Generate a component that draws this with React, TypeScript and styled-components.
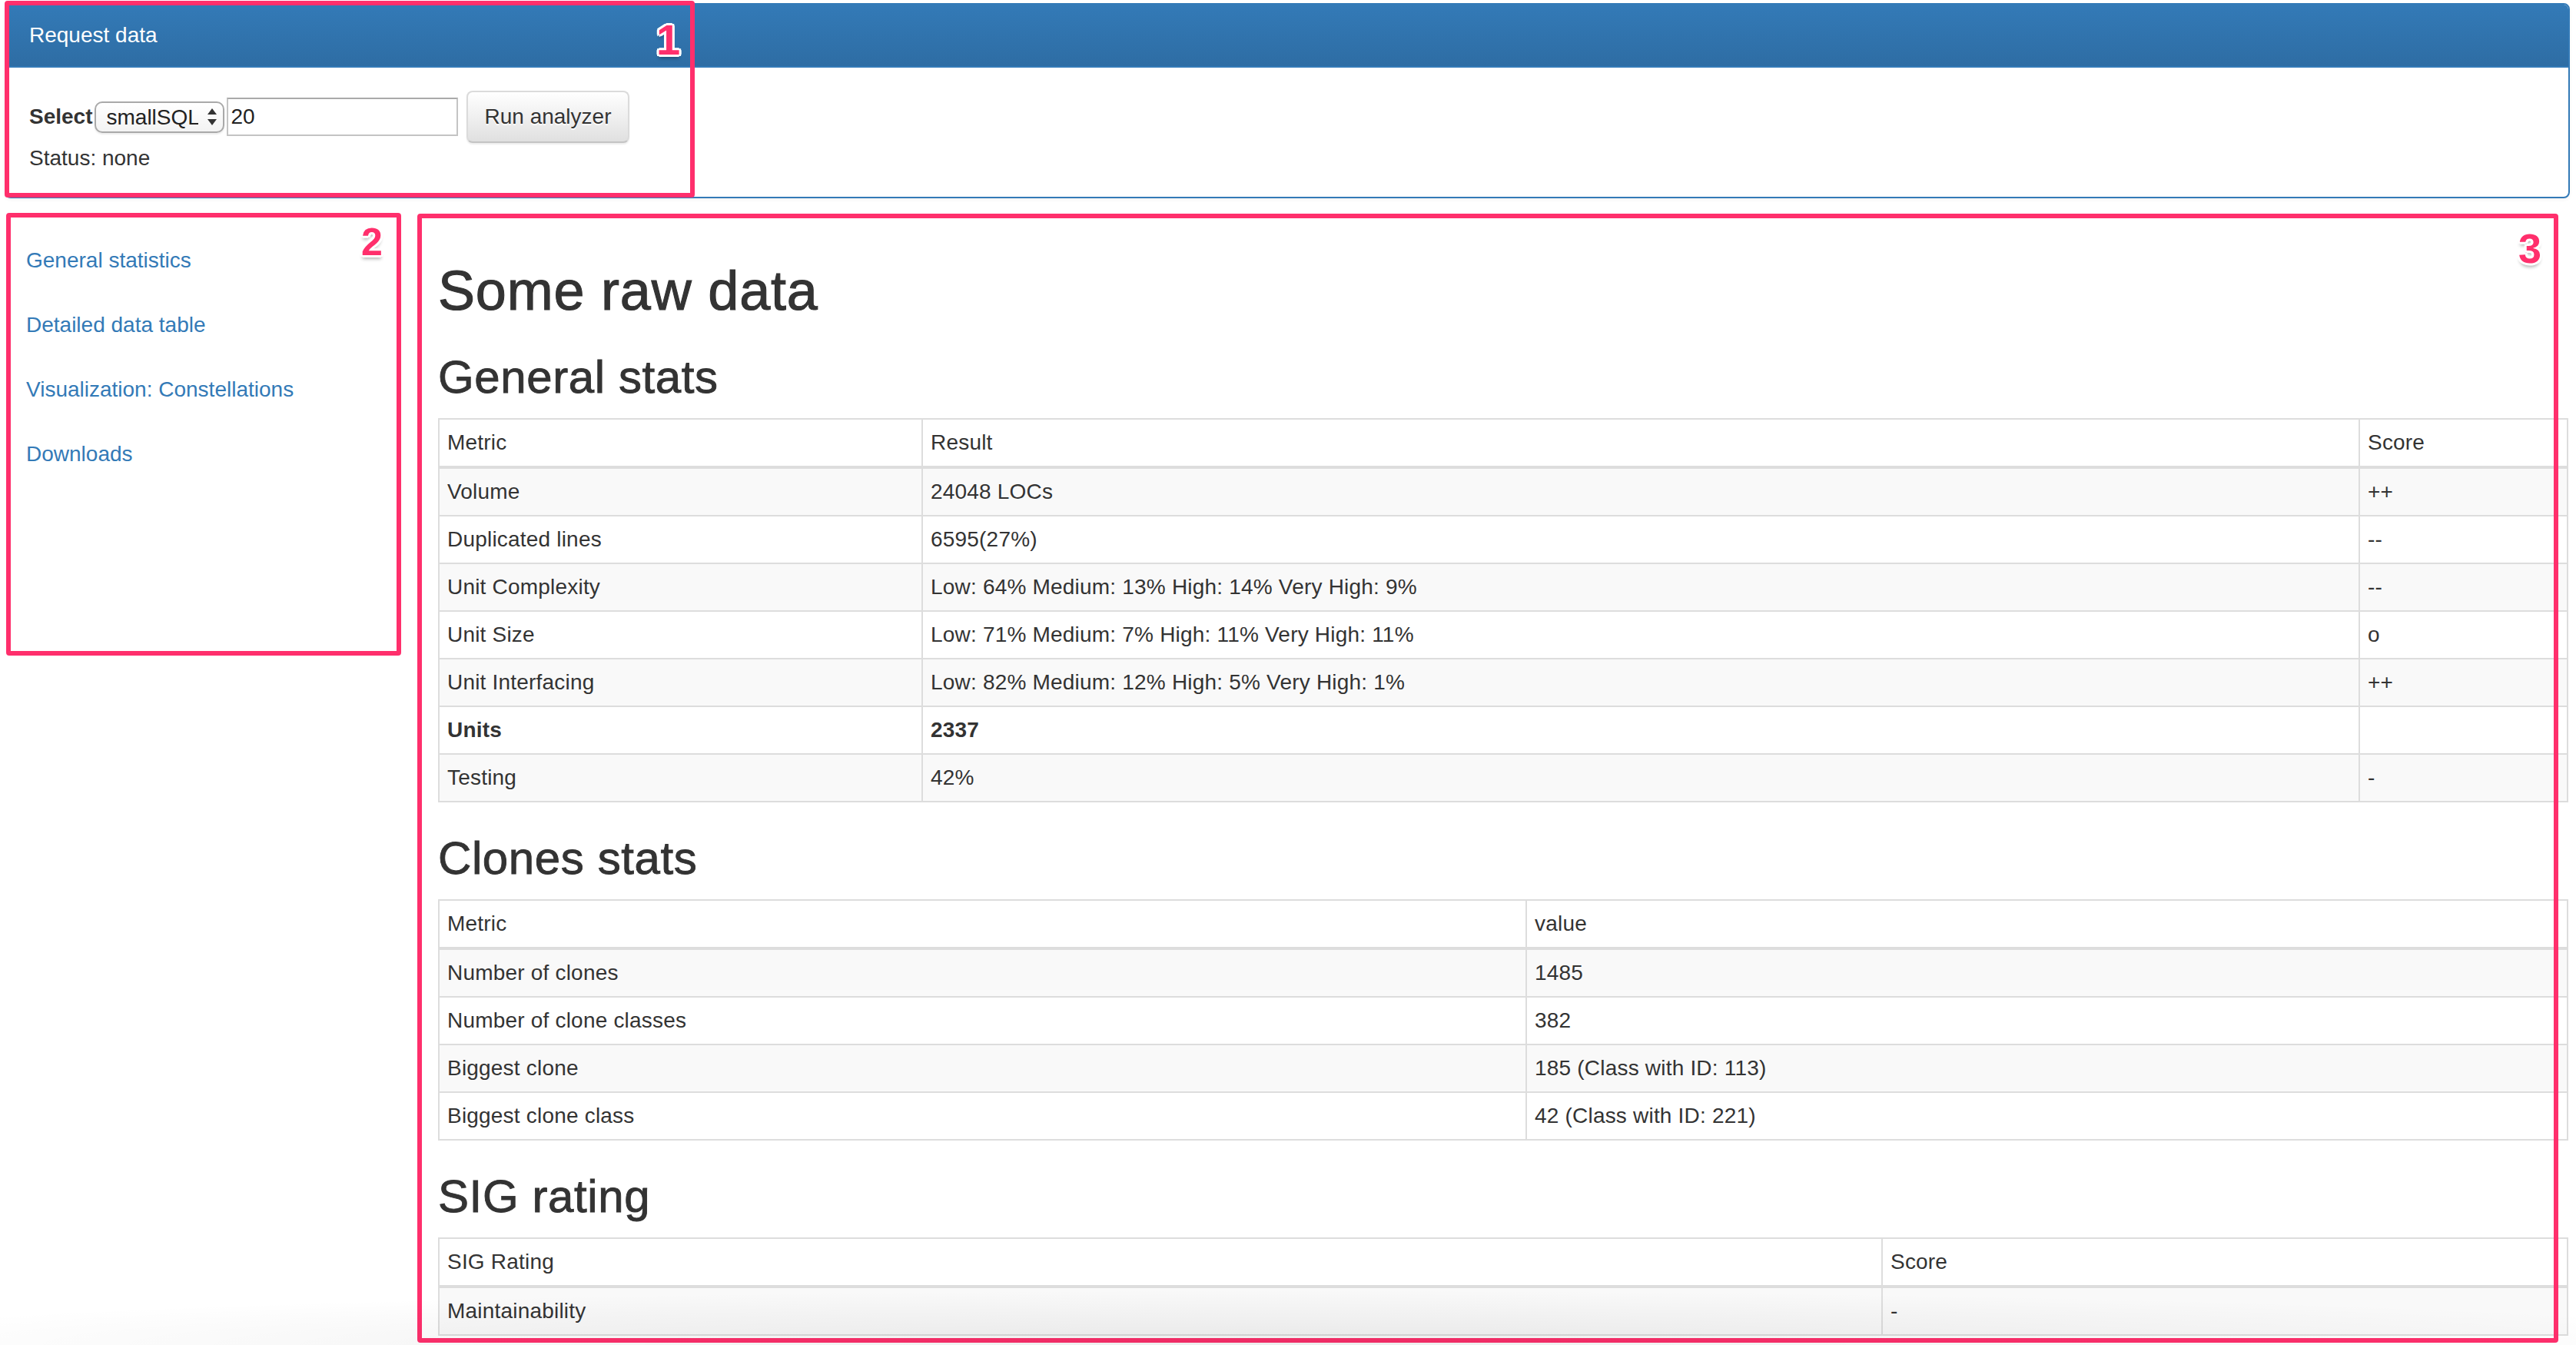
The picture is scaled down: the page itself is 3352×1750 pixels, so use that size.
import React from "react";
import styled, { createGlobalStyle } from "styled-components";

const GlobalStyle = createGlobalStyle`
  * { box-sizing: border-box; }
  html, body {
    margin: 0;
    padding: 0;
    background: #fff;
    overflow: hidden;
  }
  body {
    font-family: "Liberation Sans", Arial, Helvetica, sans-serif;
    font-size: 14px;
    line-height: 1.42857;
    color: #333;
  }
`;

const Page = styled.div`
  zoom: 2;
  position: relative;
  height: 875px;
  overflow: hidden;
  padding: 2px 4px 0 3px;
`;

/* ---------- panel ---------- */
const Panel = styled.section`
  background: #fff;
  border: 1px solid #337ab7;
  border-radius: 4px;
  box-shadow: 0 1px 2px rgba(0, 0, 0, 0.05);
  margin-bottom: 20.5px;
`;

const PanelHeading = styled.div`
  background-image: linear-gradient(to bottom, #337ab7 0, #2e6da4 100%);
  color: #fff;
  padding: 10px 15px;
  line-height: 20px;
  border-bottom: 1px solid #337ab7;
  border-radius: 3px 3px 0 0;
`;

const PanelBody = styled.div`
  padding: 15px;
`;

const FormRow = styled.div`
  display: flex;
  align-items: center;
  height: 34px;
`;

const Label = styled.label`
  font-weight: 700;
  margin-right: 1px;
`;

const SelectWrap = styled.span`
  position: relative;
  display: inline-flex;
  margin-right: 1.5px;
`;

const Select = styled.select`
  appearance: none;
  -webkit-appearance: none;
  width: 84.5px;
  height: 20.5px;
  padding: 0 16px 0 7px;
  font-family: "Liberation Sans", Arial, sans-serif;
  font-size: 14px;
  color: #222;
  border: 1px solid #a9a9a9;
  border-radius: 5px;
  background: linear-gradient(to bottom, #ffffff 0, #f3f3f3 100%);
  box-shadow: 0 1px 1px rgba(0, 0, 0, 0.08);
  outline: none;
`;

const SelectArrows = styled.svg`
  position: absolute;
  right: 5px;
  top: 50%;
  width: 6px;
  height: 11px;
  margin-top: -5.5px;
  pointer-events: none;
`;

const TextInput = styled.input`
  width: 150.5px;
  height: 25px;
  padding: 1px 2px;
  font-family: "Liberation Sans", Arial, sans-serif;
  font-size: 14px;
  color: #222;
  border: 1px solid #c4c4c4;
  border-top-color: #aaa;
  border-radius: 0;
  background: #fff;
  outline: none;
`;

const Button = styled.button`
  margin-left: 5.5px;
  height: 34px;
  padding: 6px 11px;
  white-space: nowrap;
  font-family: "Liberation Sans", Arial, sans-serif;
  font-size: 14px;
  line-height: 20px;
  color: #333;
  background-image: linear-gradient(to bottom, #fff 0, #e0e0e0 100%);
  border: 1px solid #ccc;
  border-color: #dbdbdb #dbdbdb #c4c4c4;
  border-radius: 4px;
  text-shadow: 0 1px 0 #fff;
  box-shadow: inset 0 1px 0 rgba(255, 255, 255, 0.15), 0 1px 1px rgba(0, 0, 0, 0.075);
  cursor: pointer;
`;

const Status = styled.div`
  line-height: 20px;
`;

/* ---------- layout ---------- */
const Columns = styled.div`
  display: flex;
  align-items: flex-start;
`;

const Sidebar = styled.nav`
  flex: none;
  width: 267px;
`;

const NavList = styled.ul`
  list-style: none;
  margin: 0;
  padding: 0;
`;

const NavItem = styled.li`
  & + & {
    margin-top: 2px;
  }
`;

const NavLink = styled.a`
  display: block;
  padding: 10px 14px;
  line-height: 20px;
  color: #337ab7;
  text-decoration: none;
`;

const Main = styled.main`
  flex: 1;
  min-width: 0;
  padding: 0 2px 0 15px;
`;

const H1 = styled.h1`
  margin: 20px 0 10px;
  font-size: 36px;
  font-weight: 500;
  line-height: 1.1;
  -webkit-text-stroke: 0.55px #333;
  letter-spacing: 0.4px;
`;

const H2 = styled.h2`
  margin: 20px 0 10px;
  font-size: 30px;
  font-weight: 500;
  line-height: 1.1;
  -webkit-text-stroke: 0.45px #333;
  letter-spacing: 0.3px;
`;

const Table = styled.table`
  width: 100%;
  table-layout: fixed;
  border-collapse: collapse;
  border-spacing: 0;
  border: 1px solid #ddd;
  margin-bottom: 20px;
`;

const Col = styled.col<{ $w: number }>`
  width: ${(p) => p.$w}px;
`;

const HeadCell = styled.td`
  padding: 5px;
  line-height: 20px;
  border: 1px solid #ddd;
  border-bottom-width: 2px;
  vertical-align: bottom;
  letter-spacing: 0.1px;
`;

const Row = styled.tr`
  tbody > &:nth-of-type(odd) {
    background: #f9f9f9;
  }
`;

const Cell = styled.td<{ $bold?: boolean }>`
  padding: 5px;
  line-height: 20px;
  border: 1px solid #ddd;
  vertical-align: top;
  font-weight: ${(p) => (p.$bold ? 700 : 400)};
  white-space: nowrap;
  letter-spacing: 0.1px;
`;

/* ---------- annotations ---------- */
const Marker = styled.div<{ $l: number; $t: number; $w: number; $h: number }>`
  position: absolute;
  left: ${(p) => p.$l}px;
  top: ${(p) => p.$t}px;
  width: ${(p) => p.$w}px;
  height: ${(p) => p.$h}px;
  border: 3px solid #ff2f6c;
  border-radius: 2px;
  pointer-events: none;
`;

const Badge = styled.span<{ $l: number; $t: number; $s: number }>`
  position: absolute;
  left: ${(p) => p.$l}px;
  top: ${(p) => p.$t}px;
  font-family: "Liberation Sans", Arial, sans-serif;
  font-size: ${(p) => p.$s}px;
  line-height: 1;
  font-weight: 700;
  color: #ff2f6c;
  text-shadow: -1.5px 0 #fff, 1.5px 0 #fff, 0 -1.5px #fff, 0 1.5px #fff,
    -1.2px -1.2px #fff, 1.2px 1.2px #fff, -1.2px 1.2px #fff, 1.2px -1.2px #fff,
    0 2.5px 2px rgba(0, 0, 0, 0.3);
  pointer-events: none;
`;

const BottomShade = styled.div`
  position: absolute;
  left: 0;
  right: 0;
  bottom: 0;
  height: 36px;
  background: radial-gradient(ellipse 60% 100% at 50% 100%, rgba(0, 0, 0, 0.07), rgba(0, 0, 0, 0) 100%);
  pointer-events: none;
`;

/* ---------- data ---------- */
type Line = { cells: string[]; bold?: boolean };

const general: Line[] = [
  { cells: ["Volume", "24048 LOCs", "++"] },
  { cells: ["Duplicated lines", "6595(27%)", "--"] },
  { cells: ["Unit Complexity", "Low: 64% Medium: 13% High: 14% Very High: 9%", "--"] },
  { cells: ["Unit Size", "Low: 71% Medium: 7% High: 11% Very High: 11%", "o"] },
  { cells: ["Unit Interfacing", "Low: 82% Medium: 12% High: 5% Very High: 1%", "++"] },
  { cells: ["Units", "2337", ""], bold: true },
  { cells: ["Testing", "42%", "-"] },
];

const clones: Line[] = [
  { cells: ["Number of clones", "1485"] },
  { cells: ["Number of clone classes", "382"] },
  { cells: ["Biggest clone", "185 (Class with ID: 113)"] },
  { cells: ["Biggest clone class", "42 (Class with ID: 221)"] },
];

const sig: Line[] = [{ cells: ["Maintainability", "-"] }];

function DataTable({ widths, head, rows }: { widths: number[]; head: string[]; rows: Line[] }) {
  return (
    <Table>
      <colgroup>
        {widths.map((w, i) => (
          <Col key={i} $w={w} />
        ))}
      </colgroup>
      <thead>
        <tr>
          {head.map((h) => (
            <HeadCell key={h}>{h}</HeadCell>
          ))}
        </tr>
      </thead>
      <tbody>
        {rows.map((r, i) => (
          <Row key={i}>
            {r.cells.map((c, j) => (
              <Cell key={j} $bold={r.bold}>
                {c}
              </Cell>
            ))}
          </Row>
        ))}
      </tbody>
    </Table>
  );
}

const links = ["General statistics", "Detailed data table", "Visualization: Constellations", "Downloads"];

export default function App() {
  return (
    <>
      <GlobalStyle />
      <Page>
        <Panel>
          <PanelHeading>Request data</PanelHeading>
          <PanelBody>
            <FormRow>
              <Label htmlFor="project">Select</Label>
              <SelectWrap>
                <Select id="project" defaultValue="smallSQL">
                  <option value="smallSQL">smallSQL</option>
                  <option value="hsqldb">hsqldb</option>
                </Select>
                <SelectArrows viewBox="0 0 6 11">
                  <path d="M3 0 L6 4 L0 4 Z" fill="#333" />
                  <path d="M0 7 L6 7 L3 11 Z" fill="#333" />
                </SelectArrows>
              </SelectWrap>
              <TextInput type="text" defaultValue="20" />
              <Button type="button">Run analyzer</Button>
            </FormRow>
            <Status>Status: none</Status>
          </PanelBody>
        </Panel>

        <Columns>
          <Sidebar>
            <NavList>
              {links.map((l) => (
                <NavItem key={l}>
                  <NavLink href="#">{l}</NavLink>
                </NavItem>
              ))}
            </NavList>
          </Sidebar>

          <Main>
            <H1>Some raw data</H1>
            <H2>General stats</H2>
            <DataTable widths={[314.5, 935, 135.5]} head={["Metric", "Result", "Score"]} rows={general} />
            <H2>Clones stats</H2>
            <DataTable widths={[707.5, 677.5]} head={["Metric", "value"]} rows={clones} />
            <H2>SIG rating</H2>
            <DataTable widths={[939, 446]} head={["SIG Rating", "Score"]} rows={sig} />
          </Main>
        </Columns>

        <Marker $l={3} $t={0.5} $w={449} $h={128} />
        <Marker $l={4} $t={138.5} $w={257} $h={288} />
        <Marker $l={271.5} $t={139} $w={1393} $h={734.5} />
        <Badge $l={427} $t={12} $s={28}>1</Badge>
        <Badge $l={235} $t={145} $s={25}>2</Badge>
        <Badge $l={1638.5} $t={148} $s={27}>3</Badge>
        <BottomShade />
      </Page>
    </>
  );
}
